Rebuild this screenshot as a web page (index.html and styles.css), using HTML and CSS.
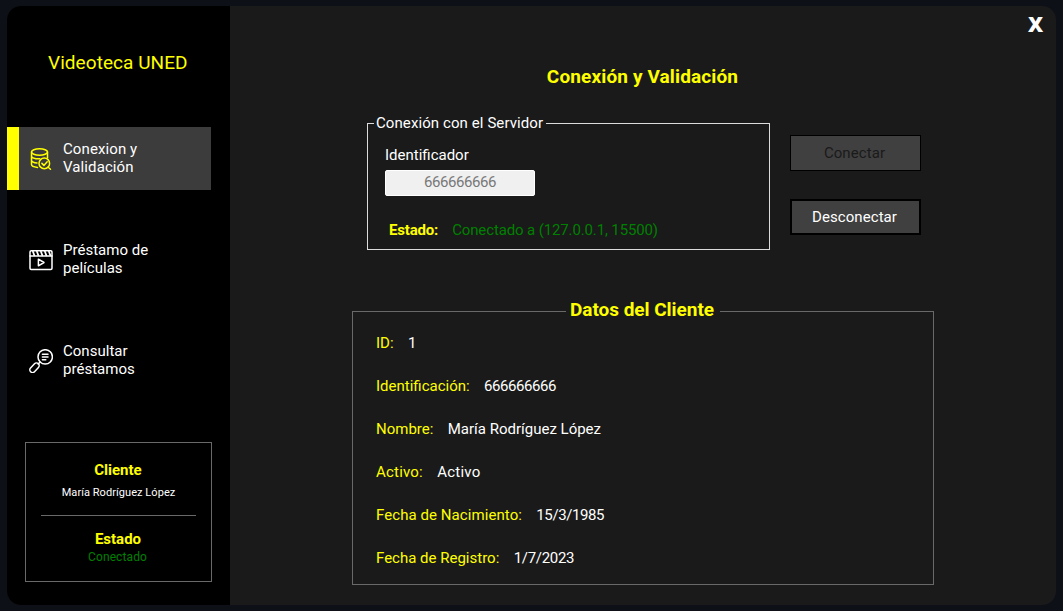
FILE: index.html
```html
<!DOCTYPE html>
<html lang="es">
<head>
<meta charset="utf-8">
<title>Videoteca UNED</title>
<link rel="stylesheet" href="styles.css">
</head>
<body>
<div class="window">
  <aside class="sidebar">
    <h1 class="brand">Videoteca UNED</h1>
    <nav class="menu">
      <a class="menu-item active">
        <svg class="icon" viewBox="0 0 24 24"><ellipse cx="10.500" cy="5" rx="8" ry="3.200"/><path d="M2.500 5v12.600c0 1.500 2.400 2.500 6 2.800M18.500 5v6M2.500 9.200c.5 1.700 3.800 2.700 8.200 2.600M2.500 13.500c.4 1.400 2.600 2.300 5.500 2.500"/><circle cx="15.300" cy="16.400" r="5.300"/><path d="M12.900 16.400l2 2 3.300-3.700M19.200 20.200l2.300 2"/></svg>
        <span>Conexion y<br>Validación</span>
      </a>
      <a class="menu-item">
        <svg class="icon" viewBox="0 0 24 24"><rect x="1" y="2.700" width="22" height="18.700" rx="1.200"/><path d="M1 8h22"/><path class="thick" d="M4 3.700l1.300 3.500M8 3.700l1.300 3.500M12 3.700l1.300 3.500M16 3.700l1.300 3.500M20 3.700l1.300 3.500"/><path d="M9.400 11.200v6.600l5.600-3.300z"/></svg>
        <span>Préstamo de<br>películas</span>
      </a>
      <a class="menu-item">
        <svg class="icon" viewBox="0 0 24 24"><circle cx="16.200" cy="7.900" r="7.200"/><path d="M13.400 5.300h5.600M13.400 8h5.600M13.400 10.700h3.400M11.200 13l-2 2"/><rect x="-5.600" y="-2.700" width="11.200" height="5.400" rx="2.700" transform="translate(5.500 18.700) rotate(-47)"/></svg>
        <span>Consultar<br>préstamos</span>
      </a>
    </nav>
    <section class="status">
      <h2>Cliente</h2>
      <p class="status-name">María Rodríguez López</p>
      <hr>
      <h2>Estado</h2>
      <p class="status-state">Conectado</p>
    </section>
  </aside>
  <main class="content">
    <button class="close">X</button>
    <h2 class="title">Conexión y Validación</h2>
    <div class="connection">
      <fieldset class="server">
        <legend>Conexión con el Servidor</legend>
        <label for="ident">Identificador</label>
        <input id="ident" class="digits" value="666666666" disabled>
        <p class="state"><b>Estado:</b><span>Conectado a (127.0.0.1, 15500)</span></p>
      </fieldset>
      <div class="actions">
        <button class="btn" disabled>Conectar</button>
        <button class="btn">Desconectar</button>
      </div>
    </div>
    <fieldset class="client">
      <legend>Datos del Cliente</legend>
      <dl>
        <div><dt>ID:</dt><dd>1</dd></div>
        <div><dt>Identificación:</dt><dd class="digits">666666666</dd></div>
        <div><dt>Nombre:</dt><dd>María Rodríguez López</dd></div>
        <div><dt class="wide">Activo:</dt><dd class="wide">Activo</dd></div>
        <div><dt class="loose">Fecha de Nacimiento:</dt><dd class="digits">15/3/1985</dd></div>
        <div><dt>Fecha de Registro:</dt><dd class="date">1/7/2023</dd></div>
      </dl>
    </fieldset>
  </main>
</div>
</body>
</html>
```

FILE: styles.css
```css
* { box-sizing: border-box; margin: 0; padding: 0; }
body {
  width: 1063px;
  height: 611px;
  padding: 6px 7px;
  overflow: hidden;
  background: #0d1017;
  color: #fff;
  font: 15px/18px Roboto, sans-serif;
}
button, input { font: inherit; }
.window {
  display: flex;
  width: 1049px;
  height: 599px;
  border-radius: 14px;
  overflow: hidden;
  background: #1a1a1a;
}
.sidebar { width: 223px; background: #000; }
.brand {
  height: 121px;
  padding: 45px 0 0 41px;
  color: #ff0;
  font-size: 19px;
  font-weight: 400;
  line-height: 24px;
  letter-spacing: 0.06px;
}
.menu { display: flex; flex-direction: column; gap: 38px; }
.menu-item {
  display: flex;
  align-items: center;
  gap: 10px;
  width: 204px;
  height: 63px;
  padding-left: 22px;
}
.menu-item span { padding-bottom: 2px; letter-spacing: 0.02px; }
.menu-item.active {
  padding-left: 10px;
  border-left: 12px solid #ff0;
  background: #3c3c3c;
}
.active span { letter-spacing: 0.1px; }
.icon {
  width: 24px;
  height: 24px;
  fill: none;
  stroke: #fff;
  stroke-width: 1.5;
  stroke-linecap: round;
  stroke-linejoin: round;
}
.active .icon { stroke: #ff0; }
.thick { stroke-width: 1.8; }
.status {
  width: 187px;
  height: 140px;
  margin: 50px 0 0 18px;
  padding: 18px 15px 0;
  border: 1px solid #696969;
  text-align: center;
}
.status h2 { margin-right: 1px; color: #ff0; font-size: 15px; line-height: 18px; }
.status-name { padding-top: 6px; font-size: 11px; line-height: 16px; letter-spacing: 0.06px; }
.status hr { height: 1px; margin: 14px 0; border: 0; background: #696969; }
.status-state { margin-right: 2px; color: #008000; font-size: 12px; letter-spacing: 0.1px; }
.content { display: flex; flex: 1; flex-direction: column; }
.close {
  align-self: flex-end;
  width: 41px;
  height: 36px;
  border: 0;
  background: none;
  color: #fff;
  font: 800 21px/35px "Open Sans", sans-serif;
}
.title {
  height: 72px;
  padding-top: 23px;
  padding-right: 1px;
  color: #ff0;
  font-size: 19px;
  line-height: 24px;
  letter-spacing: 0.13px;
  text-align: center;
}
.connection { display: flex; gap: 20px; height: 144px; padding-left: 137px; }
fieldset { border: 1px solid #dcdcdc; }
.server { width: 403px; height: 136px; padding-left: 17px; }
.server legend { margin-left: -11px; padding: 0 3px 0 2px; letter-spacing: 0.09px; }
.server label { display: block; margin-top: 14px; }
.server input {
  display: block;
  width: 150px;
  height: 26px;
  margin-top: 6px;
  padding-bottom: 2px;
  border: 1px solid #fff;
  border-radius: 2px;
  background: #f0f0f0;
  color: #787878;
  text-align: center;
}
.digits { letter-spacing: -0.42px; }
.date { letter-spacing: -0.3px; }
.loose { letter-spacing: 0.07px; }
.wide { letter-spacing: 0.2px; }
.state { display: flex; gap: 14px; margin-top: 25px; padding-left: 4px; }
.state b { color: #ff0; letter-spacing: -0.18px; }
.state span { color: #008000; letter-spacing: -0.13px; }
.actions { display: flex; flex-direction: column; gap: 28px; padding-top: 21px; }
.btn {
  width: 131px;
  height: 36px;
  padding-right: 2px;
  border: 2px solid #000;
  background: #404040;
  color: #fff;
  letter-spacing: 0.08px;
}
.btn:disabled { border-width: 1px; color: #1a1a1a; }
.client {
  width: 582px;
  height: 286px;
  margin: 41px 0 0 122px;
  padding-left: 23px;
  border-color: #696969;
}
.client legend {
  height: 24px;
  margin-left: 190px;
  padding: 0 6px 0 4px;
  color: #ff0;
  font-size: 19px;
  font-weight: 700;
  line-height: 22px;
  letter-spacing: -0.04px;
}
.client dl { display: flex; flex-direction: column; gap: 25px; margin-top: 11px; }
.client dl div { display: flex; gap: 14.4px; }
.client dt { color: #ff0; }
```
